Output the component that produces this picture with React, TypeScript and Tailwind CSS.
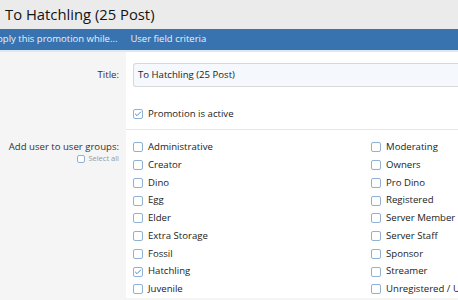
import { Check } from 'lucide-react';

const left = [
  'Administrative',
  'Creator',
  'Dino',
  'Egg',
  'Elder',
  'Extra Storage',
  'Fossil',
  'Hatchling',
  'Juvenile',
];
const right = [
  'Moderating',
  'Owners',
  'Pro Dino',
  'Registered',
  'Server Member',
  'Server Staff',
  'Sponsor',
  'Streamer',
  'Unregistered / Unconfirmed',
];

function Box({ checked = false, small = false }: { checked?: boolean; small?: boolean }) {
  return (
    <span
      className={`flex shrink-0 items-center justify-center rounded-[2px] border border-[#8fb1d6] bg-white ${
        small ? 'h-[8px] w-[8px]' : 'h-[10px] w-[10px]'
      }`}
    >
      {checked && <Check className="h-[8px] w-[8px] text-[#4f87c2]" strokeWidth={3} />}
    </span>
  );
}

function Item({ label, checked }: { label: string; checked?: boolean }) {
  return (
    <div className="flex h-[17.75px] items-center gap-[5px] whitespace-nowrap">
      <Box checked={checked} />
      <span className="text-[9.6px] text-[#222]">{label}</span>
    </div>
  );
}

export default function App() {
  return (
    <div
      className="h-[300px] w-[458px] overflow-hidden bg-[#f5f5f5]"
      style={{ fontFamily: '"Open Sans", "Noto Sans", sans-serif' }}
    >
      <div className="flex h-[29px] items-center bg-[#ebebeb] pl-[5px]">
        <h1 className="text-[14.8px] leading-none text-[#141414]">To Hatchling (25 Post)</h1>
      </div>

      <div className="flex h-[23px] items-center whitespace-nowrap border-b-2 border-[#dfe7f0] bg-[#3873b0] text-[9.5px] text-[#eaf1f8]">
        <span className="-ml-[9px]">Apply this promotion while...</span>
        <span className="ml-[13px]">User field criteria</span>
      </div>

      <div className="flex">
        <div className="w-[126px] shrink-0" />
        <div className="flex-1 bg-white">
          <div className="border-b border-[#e6e6e6] pb-[8px] pt-[11px]">
            <div className="flex items-center">
              <div className="-ml-[126px] w-[119px] text-right text-[9.6px] text-[#333]">Title:</div>
              <div className="ml-[14px] flex h-[24px] flex-1 items-center rounded-l-[3px] border border-r-0 border-[#d8d8d8] bg-[#f5f9fd] pl-[4px] text-[9.6px] text-[#222]">
                To Hatchling (25 Post)
              </div>
            </div>
            <div className="ml-[7px] mt-[20px] flex items-center gap-[5px]">
              <Box checked />
              <span className="text-[9.6px] text-[#222]">Promotion is active</span>
            </div>
          </div>

          <div className="flex pt-[8px]">
            <div className="-ml-[126px] flex w-[119px] shrink-0 flex-col items-end whitespace-nowrap">
              <span className="text-[9.6px] leading-[17.75px] text-[#333]">Add user to user groups:</span>
              <div className="-mt-[3px] flex items-center gap-[3px]">
                <Box small />
                <span className="text-[7.5px] text-[#999]">Select all</span>
              </div>
            </div>
            <div className="ml-[14px] grid flex-1 grid-cols-[238px_1fr]">
              <div className="flex flex-col">
                {left.map((l) => (
                  <Item key={l} label={l} checked={l === 'Hatchling'} />
                ))}
              </div>
              <div className="flex flex-col">
                {right.map((r) => (
                  <Item key={r} label={r} />
                ))}
              </div>
            </div>
          </div>
        </div>
      </div>
    </div>
  );
}
